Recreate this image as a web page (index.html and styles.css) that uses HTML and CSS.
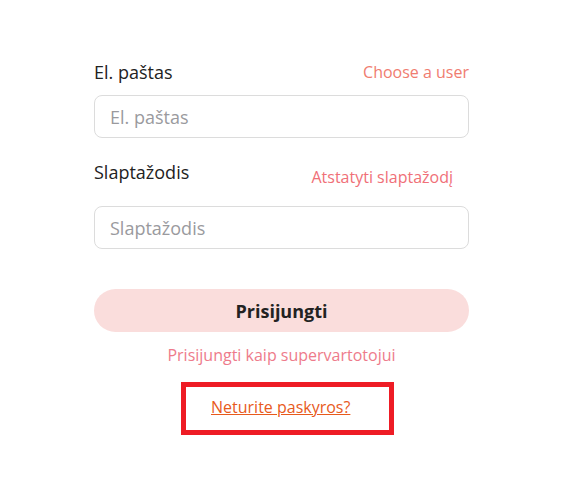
FILE: index.html
```html
<!DOCTYPE html>
<html lang="lt">
<head>
  <meta charset="UTF-8">
  <meta name="viewport" content="width=device-width, initial-scale=1.0">
  <title>Prisijungimas</title>
  <link rel="stylesheet" href="styles.css">
</head>
<body>
  <main class="login">
    <form class="login-form">
      <div class="field-head">
        <label for="email">El. paštas</label>
        <a href="#" class="head-link">Choose a user</a>
      </div>
      <input type="email" id="email" placeholder="El. paštas">

      <div class="field-head field-head-pass">
        <label for="password">Slaptažodis</label>
        <a href="#" class="head-link reset-link">Atstatyti slaptažodį</a>
      </div>
      <input type="password" id="password" placeholder="Slaptažodis">

      <button type="submit" class="btn-login">Prisijungti</button>

      <a href="#" class="super-link">Prisijungti kaip supervartotojui</a>

      <div class="register-box">
        <a href="#" class="register-link">Neturite paskyros?</a>
      </div>
    </form>
  </main>
</body>
</html>
```

FILE: styles.css
```css
body {
  margin: 0;
  padding: 0 10px 0 0;
  background-color: #fff;
  font-family: "Open Sans", sans-serif;
  color: #222;
}

.login {
  width: 375px;
  margin: 0 auto;
  padding-top: 60px;
}

.login-form {
  display: flex;
  flex-direction: column;
}

.field-head {
  display: flex;
  justify-content: space-between;
  align-items: center;
  margin-bottom: 11px;
}

.field-head label {
  font-size: 18px;
  line-height: 24px;
  color: #222;
}

.head-link {
  font-size: 16px;
  color: #f07c70; /* salmon */
  text-decoration: none;
}

.field-head-pass {
  margin-top: 22px;
  align-items: flex-start;
  margin-bottom: 18px;
}

.reset-link {
  margin-top: 6px;
  margin-right: 16px;
  color: #f07078;
}

input {
  box-sizing: border-box;
  height: 43px;
  padding: 0 15px;
  border: 1px solid #dcdcdc;
  border-radius: 8px;
  font-family: inherit;
  font-size: 18px;
  color: #222;
}

input::placeholder {
  color: #9a9a9e;
}

input:focus {
  outline: none;
}

.btn-login {
  margin-top: 40px;
  height: 43px;
  border: none;
  border-radius: 22px;
  background-color: #fadddc;
  font-family: inherit;
  font-size: 18px;
  font-weight: 700;
  color: #222;
  cursor: pointer;
}

.super-link {
  margin-top: 12px;
  text-align: center;
  font-size: 16px;
  color: #ee7b8b;
  text-decoration: none;
}

.register-box {
  align-self: center;
  margin-top: 16px;
  margin-left: 12px;
  box-sizing: border-box;
  width: 213px;
  height: 53px;
  padding: 9px 0 0 25px;
  border: 5px solid #ee1c25;
}

.register-link {
  font-size: 16px;
  color: #e85a1c;
}
```
